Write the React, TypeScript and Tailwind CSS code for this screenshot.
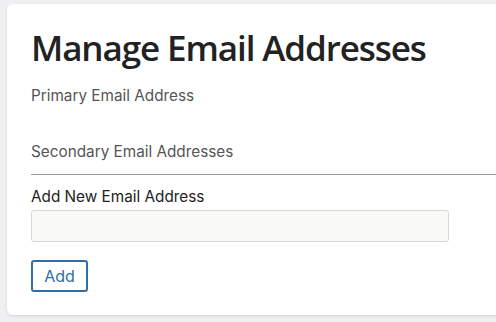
export default function App() {
  return (
    <div className="h-[322px] w-[496px] overflow-hidden bg-[#eff0f2] pt-[4px] pl-[7px] font-['Inter',sans-serif]">
      <div className="w-[540px] h-[311px] rounded-md bg-white shadow-[0_1px_3px_rgba(0,0,0,0.12)] pl-[24px] pt-[22px]">
        <h1 className="font-['Open_Sans',sans-serif] text-[35px] leading-[44px] font-semibold tracking-[-1.1px] text-[#222]">
          Manage Email Addresses
        </h1>
        <p className="mt-[16px] text-[15.3px] leading-[20px] text-[#555]">Primary Email Address</p>
        <p className="mt-[36px] text-[15.3px] leading-[20px] text-[#555]">Secondary Email Addresses</p>
        <hr className="mt-[12px] border-t border-[#9a9a9a]" />
        <label className="block mt-[12px] text-[15.3px] leading-[20px] text-[#222]">Add New Email Address</label>
        <input
          type="text"
          className="mt-[3px] block h-[32px] w-[418px] rounded-[3px] border border-[#d6d6d4] bg-[#f9f9f8]"
        />
        <button className="mt-[18px] h-[32px] w-[57px] rounded-[3px] border-2 border-[#2f6ea7] text-[16px] text-[#2f6ea7]">
          Add
        </button>
      </div>
    </div>
  );
}
